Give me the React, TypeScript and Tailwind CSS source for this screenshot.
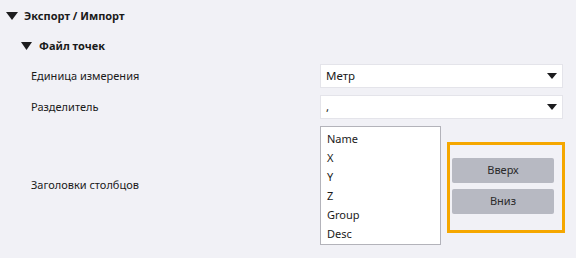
import React from 'react';

function Caret({ w, h, className }: { w: number; h: number; className?: string }) {
  return (
    <svg width={w} height={h} viewBox={`0 0 ${w} ${h}`} className={className}>
      <polygon points={`0,0 ${w},0 ${w / 2},${h}`} fill="#1c1c1e" />
    </svg>
  );
}

function Select({ value }: { value: string }) {
  return (
    <div className="flex h-[24px] w-[243px] items-center justify-between border border-[#e4e4ea] bg-white pl-[5px] pr-[5px]">
      <span className="text-[11.5px] text-[#1a1a1a]">{value}</span>
      <Caret w={10} h={6} />
    </div>
  );
}

export default function App() {
  const columns = ['Name', 'X', 'Y', 'Z', 'Group', 'Desc'];

  return (
    <div
      className="h-[258px] w-[576px] overflow-hidden bg-[#f1f1f6] text-[#1a1a1a]"
      style={{ fontFamily: '"Noto Sans", "Open Sans", sans-serif' }}
    >
      {/* Экспорт / Импорт */}
      <div className="flex h-[32px] items-center pl-[6px]">
        <Caret w={12} h={8} />
        <span className="ml-[6px] text-[11px] font-bold">Экспорт / Импорт</span>
      </div>

      {/* Файл точек */}
      <div className="flex h-[28px] items-center pl-[21px]">
        <Caret w={11} h={8} />
        <span className="ml-[7px] text-[11px] font-bold">Файл точек</span>
      </div>

      <div className="mt-[4px] flex flex-col gap-[7px] pl-[31px]">
        <div className="flex items-center">
          <span className="w-[289px] text-[11px]">Единица измерения</span>
          <Select value="Метр" />
        </div>

        <div className="flex items-center">
          <span className="w-[289px] text-[11px]">Разделитель</span>
          <Select value="," />
        </div>

        <div className="flex items-center">
          <span className="w-[289px] text-[11px]">Заголовки столбцов</span>
          <div className="flex h-[119px] w-[121px] flex-col border border-[#b3b3ba] bg-white pl-[6px] pt-[2px]">
            {columns.map((c) => (
              <span key={c} className="text-[11px] leading-[19px]">
                {c}
              </span>
            ))}
          </div>
          <div className="ml-[6px] mt-[4px] flex h-[91px] w-[118px] flex-col gap-[6px] border-[3px] border-[#f5a700] pl-[2px] pr-[8px] pt-[13px]">
            <button className="h-[25px] rounded-[2px] bg-[#b7b9c2] text-[11px] text-[#2a2a2a]">Вверх</button>
            <button className="h-[25px] rounded-[2px] bg-[#b7b9c2] text-[11px] text-[#2a2a2a]">Вниз</button>
          </div>
        </div>
      </div>
    </div>
  );
}
